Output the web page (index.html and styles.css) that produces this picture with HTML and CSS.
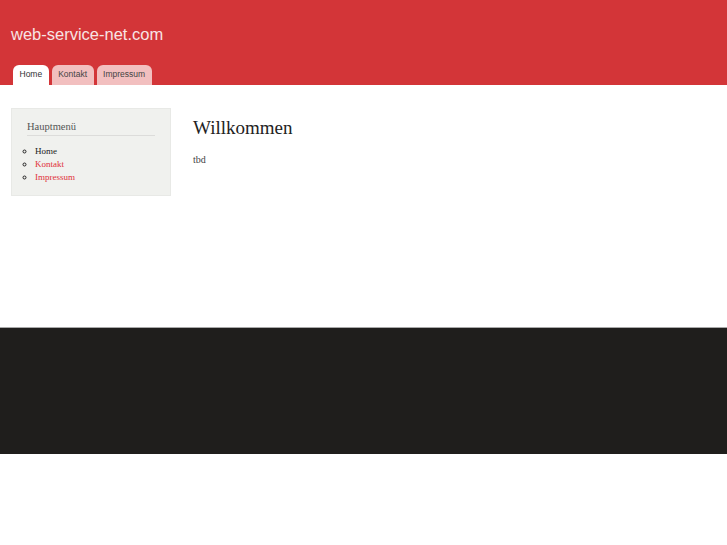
FILE: index.html
```html
<!DOCTYPE html>
<html>
<head>
<meta charset="utf-8">
<link rel="stylesheet" href="styles.css">
</head>
<body>
<div class="header">
  <div class="site-name">web-service-net.com</div>
  <ul class="tabs">
    <li class="tab active">Home</li>
    <li class="tab">Kontakt</li>
    <li class="tab">Impressum</li>
  </ul>
</div>
<div class="content">
  <div class="sidebar">
    <div class="block-title">Hauptmenü</div>
    <ul class="menu">
      <li class="current">Home</li>
      <li><a href="#">Kontakt</a></li>
      <li><a href="#">Impressum</a></li>
    </ul>
  </div>
  <div class="main">
    <h1>Willkommen</h1>
    <p>tbd</p>
  </div>
</div>
<div class="footer"></div>
</body>
</html>
```
FILE: styles.css
```css
html, body { margin: 0; padding: 0; background: #fff; }
body { font-family: "Liberation Serif", serif; color: #333; }
.header { background: #d33538; height: 85px; display: flex; flex-direction: column; }
.site-name { font-family: "Liberation Sans", sans-serif; font-size: 16.5px; color: #f8e4e4; padding: 24px 0 0 11px; line-height: 20px; }
.tabs { list-style: none; margin: 21px 0 0 13px; padding: 0; display: flex; gap: 3px; }
.tab { font-family: "Liberation Sans", sans-serif; font-size: 8.5px; color: #444; background: #f2bfbf; height: 20px; line-height: 19px; padding: 0 6.5px; border-radius: 6px 6px 0 0; box-sizing: border-box; }
.tab.active { background: #fff; color: #333; }
.content { display: flex; height: 242px; padding: 23px 0 0 11px; box-sizing: border-box; }
.sidebar { width: 160px; height: 88px; background: #f0f1ee; border: 1px solid #e8e9e6; box-sizing: border-box; padding: 12px 15px 0 15px; }
.block-title { font-size: 10.5px; color: #555; line-height: 12px; padding-bottom: 2px; border-bottom: 1px solid #dcdcda; }
.menu { margin: 9px 0 0 0; padding: 0 0 0 8px; list-style: circle; font-size: 9px; line-height: 13px; }
.menu li { color: #222; }
.menu a { color: #e03038; text-decoration: none; }
.main { margin-left: 22px; }
h1 { font-weight: normal; font-size: 19px; color: #222; margin: 9px 0 0 0; line-height: 22px; }
p { font-size: 10px; color: #444; margin: 15px 0 0 0; }
.footer { height: 126px; background: #1f1e1c; border-top: 1px solid #a9a9a9; }
```
